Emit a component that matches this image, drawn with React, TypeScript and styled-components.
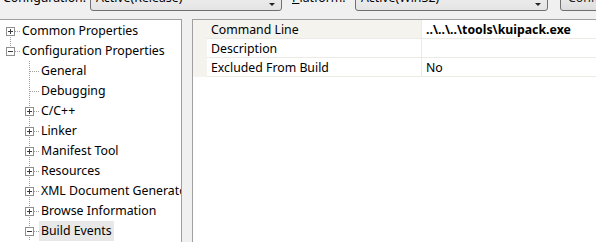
import React from "react"
import styled, { createGlobalStyle } from "styled-components"

type Expander = "plus" | "minus" | "none"

type TreeNode = {
  label: string
  depth: number
  expander: Expander
  selected?: boolean
  // which connector pieces are drawn in each indent cell
  lines: Array<{ up?: boolean; down?: boolean; across?: boolean }>
}

const childLines = [{}, { up: true, down: true, across: true }]

const treeNodes: TreeNode[] = [
  { label: "Common Properties", depth: 0, expander: "plus", lines: [{ down: true, across: true }] },
  { label: "Configuration Properties", depth: 0, expander: "minus", lines: [{ up: true, across: true }] },
  { label: "General", depth: 1, expander: "none", lines: childLines },
  { label: "Debugging", depth: 1, expander: "none", lines: childLines },
  { label: "C/C++", depth: 1, expander: "plus", lines: childLines },
  { label: "Linker", depth: 1, expander: "plus", lines: childLines },
  { label: "Manifest Tool", depth: 1, expander: "plus", lines: childLines },
  { label: "Resources", depth: 1, expander: "plus", lines: childLines },
  { label: "XML Document Generator", depth: 1, expander: "plus", lines: childLines },
  { label: "Browse Information", depth: 1, expander: "plus", lines: childLines },
  { label: "Build Events", depth: 1, expander: "minus", selected: true, lines: childLines },
]

type Property = {
  name: string
  value: string
  bold?: boolean
  highlighted?: boolean
}

const properties: Property[] = [
  { name: "Command Line", value: "..\\..\\..\\tools\\kuipack.exe", bold: true, highlighted: true },
  { name: "Description", value: "" },
  { name: "Excluded From Build", value: "No" },
]

const App: React.FunctionComponent = () => {
  return (
    <>
      <GlobalStyle />
      <Window>
        {/* Configuration / Platform bar */}
        <TopBar>
          <BarLabel width={90} align="right">
            {"Configuration:"}
          </BarLabel>
          <Combo width={192}>
            <ComboText>{"Active(Release)"}</ComboText>
            <ComboArrow />
          </Combo>
          <BarLabel width={73} align="left">
            <u>{"P"}</u>
            {"latform:"}
          </BarLabel>
          <Combo width={193}>
            <ComboText>{"Active(Win32)"}</ComboText>
            <ComboArrow />
          </Combo>
          <BarButton>{"Configuration Manager..."}</BarButton>
        </TopBar>

        <Body>
          {/* Category tree */}
          <TreePanel>
            {treeNodes.map((node) => (
              <TreeRow key={node.label}>
                {node.lines.map((cell, i) => (
                  <Connector
                    key={i}
                    {...cell}
                    expander={i === node.depth ? node.expander : "none"}
                  />
                ))}
                <TreeLabel selected={node.selected}>{node.label}</TreeLabel>
              </TreeRow>
            ))}
          </TreePanel>

          {/* Property grid */}
          <Grid>
            {properties.map((p) => (
              <GridRow key={p.name}>
                <Margin />
                <NameCell highlighted={p.highlighted}>{p.name}</NameCell>
                <ValueCell bold={p.bold}>{p.value}</ValueCell>
              </GridRow>
            ))}
          </Grid>
        </Body>
      </Window>
    </>
  )
}

export default App

/**
 * Tree connector cell: dotted lines plus an optional expander box
 */

type ConnectorProps = {
  up?: boolean
  down?: boolean
  across?: boolean
  expander: Expander
}

const Connector: React.FunctionComponent<ConnectorProps> = ({ up, down, across, expander }) => (
  <ConnectorCell>
    <svg width="19" height="20" viewBox="0 0 19 20">
      <g stroke="#a0a0a0" strokeWidth="1" strokeDasharray="1 1" fill="none">
        {up && <line x1="9.5" y1="0" x2="9.5" y2="10" />}
        {down && <line x1="9.5" y1="10" x2="9.5" y2="20" />}
        {across && <line x1="10" y1="10.5" x2="19" y2="10.5" />}
      </g>
      {expander !== "none" && (
        <g>
          <rect x="5.5" y="6.5" width="8" height="8" fill="#ffffff" stroke="#8f8f8f" />
          <line x1="7" y1="10.5" x2="12" y2="10.5" stroke="#3c3c3c" />
          {expander === "plus" && <line x1="9.5" y1="8" x2="9.5" y2="13" stroke="#3c3c3c" />}
        </g>
      )}
    </svg>
  </ConnectorCell>
)

/**
 * Styled components
 */

const GlobalStyle = createGlobalStyle`
  body {
    margin: 0;
    overflow: hidden;
    background: #f0f0f0;
  }
`

const Window = styled("div")`
  display: flex;
  flex-direction: column;
  width: 596px;
  height: 242px;
  overflow: hidden;
  background: #f0f0f0;
  font-family: "Noto Sans", "Open Sans", sans-serif;
  font-size: 12.3px;
  color: #000;
`

const TopBar = styled("div")`
  display: flex;
  align-items: center;
  height: 22px;
  margin-top: -11px;
  flex-shrink: 0;
`

const BarLabel = styled("div")<{ width: number; align: "left" | "right" }>`
  width: ${(p) => p.width}px;
  flex-shrink: 0;
  box-sizing: border-box;
  padding: ${(p) => (p.align === "right" ? "0 4px 0 0" : "0 0 0 10px")};
  text-align: ${(p) => p.align};
  margin-top: -6px;
  white-space: nowrap;
`

const Combo = styled("div")<{ width: number }>`
  display: flex;
  align-items: center;
  width: ${(p) => p.width}px;
  flex-shrink: 0;
  height: 22px;
  box-sizing: border-box;
  border: 1px solid #707070;
  border-radius: 3px;
  background: linear-gradient(#f2f2f2, #e4e4e4);
  padding-left: 5px;
`

const ComboText = styled("span")`
  flex: 1;
  margin-top: -6px;
  white-space: nowrap;
`

const ComboArrow = styled("span")`
  width: 0;
  height: 0;
  margin-right: 6px;
  margin-top: 8px;
  border-left: 3px solid transparent;
  border-right: 3px solid transparent;
  border-top: 3px solid #222;
`

const BarButton = styled("div")`
  flex-shrink: 0;
  margin-left: 12px;
  height: 22px;
  box-sizing: border-box;
  border: 1px solid #707070;
  border-radius: 3px;
  background: linear-gradient(#f2f2f2, #dddddd);
  padding: 0 7px;
  white-space: nowrap;
  line-height: 16px;
  color: #222;
`

const Body = styled("div")`
  display: flex;
  flex: 1;
  gap: 10px;
  padding-top: 8px;
  min-height: 0;
`

const TreePanel = styled("div")`
  width: 183px;
  margin-left: -1px;
  flex-shrink: 0;
  box-sizing: border-box;
  border: 1px solid #a0a0a0;
  border-bottom: none;
  background: #ffffff;
  padding-top: 1px;
  overflow: hidden;
`

const TreeRow = styled("div")`
  display: flex;
  align-items: center;
  height: 20px;
  margin-left: 1px;
`

const ConnectorCell = styled("div")`
  display: flex;
  width: 19px;
  height: 20px;
  flex-shrink: 0;
`

const TreeLabel = styled("span")<{ selected?: boolean }>`
  padding: 1px 2px 2px;
  white-space: nowrap;
  background: ${(p) => (p.selected ? "#e8e8e8" : "transparent")};
`

const Grid = styled("div")`
  display: flex;
  flex-direction: column;
  flex: 1;
  border-top: 1px solid #a0a0a0;
  border-left: 1px solid #a0a0a0;
  background: #ffffff;
`

const GridRow = styled("div")`
  display: flex;
  height: 19px;
  flex-shrink: 0;
`

const Margin = styled("div")`
  width: 14px;
  flex-shrink: 0;
  background: #f4f3ee;
`

const NameCell = styled("div")<{ highlighted?: boolean }>`
  width: 215px;
  flex-shrink: 0;
  box-sizing: border-box;
  padding: 2px 0 0 4px;
  line-height: 16px;
  border-bottom: 1px solid #ebeae4;
  border-right: 1px solid #ebeae4;
  background: ${(p) => (p.highlighted ? "#f4f3ee" : "#ffffff")};
  white-space: nowrap;
`

const ValueCell = styled("div")<{ bold?: boolean }>`
  flex: 1;
  box-sizing: border-box;
  padding: 2px 0 0 4px;
  line-height: 16px;
  border-bottom: 1px solid #ebeae4;
  font-weight: ${(p) => (p.bold ? 700 : 400)};
  white-space: nowrap;
`
